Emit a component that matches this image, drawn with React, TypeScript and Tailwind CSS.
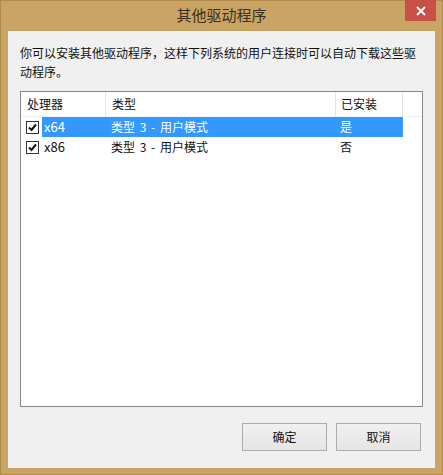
import React from "react";

type Row = { arch: string; type: string; installed: string; selected?: boolean };

const rows: Row[] = [
  { arch: "x64", type: "类型 3 - 用户模式", installed: "是", selected: true },
  { arch: "x86", type: "类型 3 - 用户模式", installed: "否" },
];

const font = {
  fontFamily: '"Noto Sans CJK SC", "Liberation Sans", sans-serif',
};

const CheckBox = () => (
  <div className="w-[13px] h-[13px] border border-[#333333] bg-white flex items-center justify-center">
    <svg width="11" height="11" viewBox="0 0 11 11">
      <path d="M2 5.5 L4.5 8 L9 2.5" stroke="#111111" strokeWidth="2" fill="none" />
    </svg>
  </div>
);

const Button = ({ label }: { label: string }) => (
  <button className="w-[85px] h-[28px] border border-[#acacac] bg-gradient-to-b from-[#f0f0f0] to-[#e5e5e5] text-[12px] text-[#111111]">
    {label}
  </button>
);

export default function App() {
  return (
    <div
      className="w-[443px] h-[475px] bg-[#c9a465] border border-[#b08a4a] flex flex-col"
      style={font}
    >
      <div className="relative h-[30px] flex items-center justify-center">
        <span className="text-[15px] text-[#3b2f1d] -mt-[1px]">其他驱动程序</span>
        <div className="absolute right-[6px] top-[-1px] w-[31px] h-[21px] bg-[#c75049] flex items-center justify-center">
          <svg width="10" height="10" viewBox="0 0 10 10">
            <path d="M1 1 L9 9 M9 1 L1 9" stroke="#ffffff" strokeWidth="2" />
          </svg>
        </div>
      </div>

      <div className="flex-1 mx-[7px] mb-[6px] bg-[#f0f0f0] flex flex-col px-[12px]">
        <p className="pt-[12px] text-[12px] leading-[19px] text-[#111111] w-[400px]">
          你可以安装其他驱动程序，这样下列系统的用户连接时可以自动下载这些驱动程序。
        </p>

        <div className="mt-[10px] h-[316px] border border-[#828790] bg-white flex flex-col">
          <div className="flex h-[25px] text-[12px] text-[#111111] border-b border-[#f0f0f0]">
            <div className="w-[85px] pl-[6px] flex items-center border-r border-[#e5e5e5]">处理器</div>
            <div className="w-[230px] pl-[6px] flex items-center border-r border-[#e5e5e5]">类型</div>
            <div className="w-[67px] pl-[5px] flex items-center border-r border-[#e5e5e5]">已安装</div>
          </div>
          {rows.map((r) => (
            <div key={r.arch} className="flex h-[20px] text-[12px]">
              <div className="w-[21px] pl-[5px] flex items-center">
                <CheckBox />
              </div>
              <div
                className={
                  r.selected
                    ? "w-[361px] flex items-center bg-[#3399ff] text-white"
                    : "w-[361px] flex items-center text-[#111111]"
                }
              >
                <div className="w-[64px] pl-[2px] text-[13px]">{r.arch}</div>
                <div className="w-[230px] pl-[5px] [word-spacing:2px]">{r.type}</div>
                <div className="w-[67px] pl-[4px]">{r.installed}</div>
              </div>
            </div>
          ))}
        </div>

        <div className="mt-[16px] flex justify-end gap-[9px] pr-[2px]">
          <Button label="确定" />
          <Button label="取消" />
        </div>
      </div>
    </div>
  );
}
